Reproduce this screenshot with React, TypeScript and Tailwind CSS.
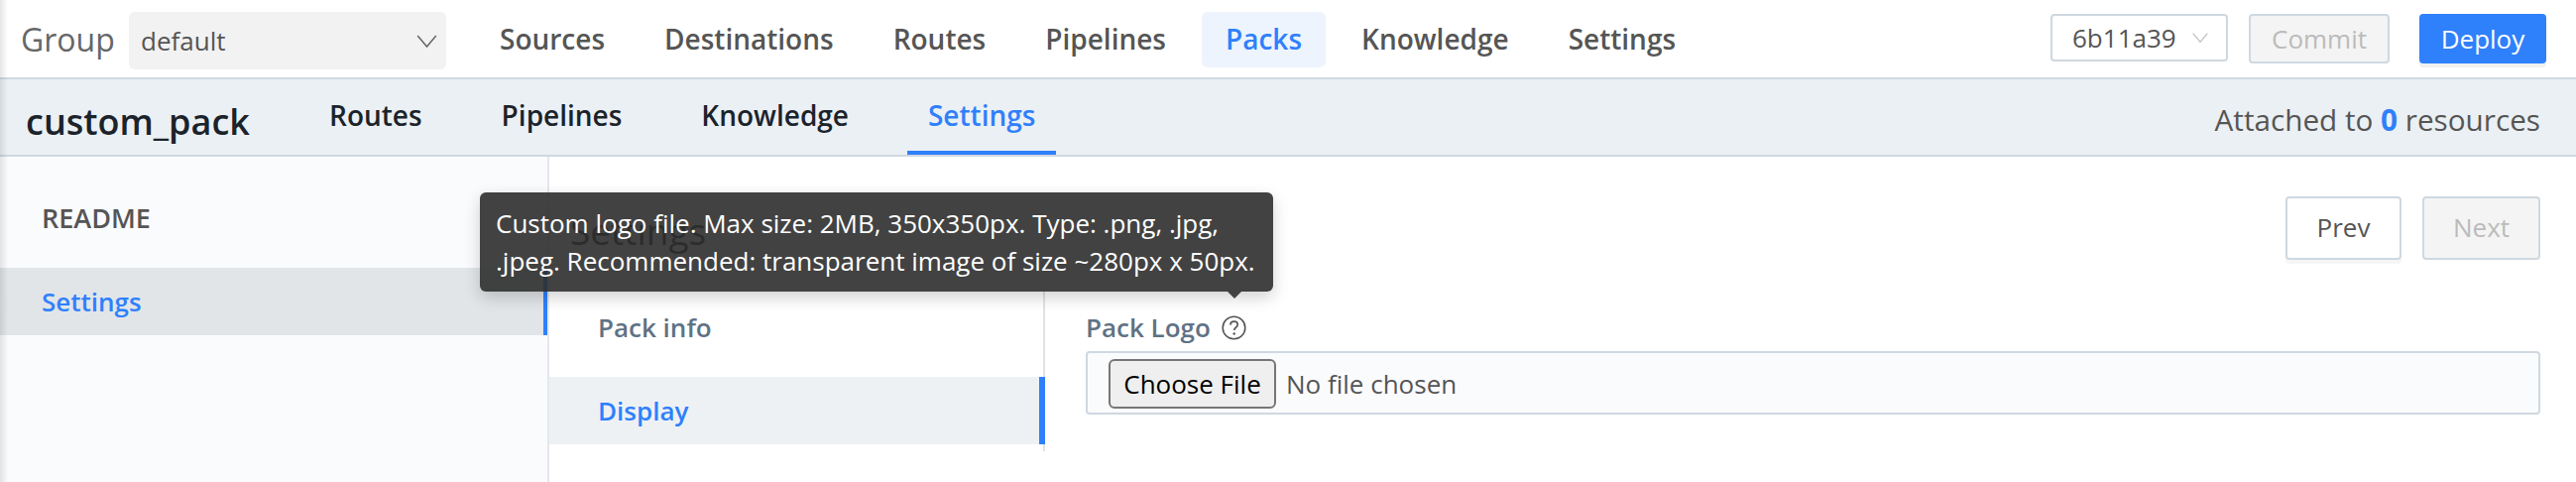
import React from "react";

function Chevron({ className }: { className: string }) {
  return (
    <svg viewBox="0 0 22 14" className={className} fill="none" stroke="currentColor" strokeWidth="1.6">
      <path d="M1 1l10 12L21 1" />
    </svg>
  );
}

const mainNav = [
  { label: "Sources" },
  { label: "Destinations" },
  { label: "Routes" },
  { label: "Pipelines" },
  { label: "Packs", active: true },
  { label: "Knowledge" },
  { label: "Settings" },
];

const subNav = [
  { label: "Routes" },
  { label: "Pipelines" },
  { label: "Knowledge" },
  { label: "Settings", active: true },
];

export default function App() {
  return (
    <div className="relative flex h-[486px] w-[2598px] flex-col overflow-hidden bg-white font-['Open_Sans',sans-serif] text-[#555]">
      <header className="flex h-[80px] shrink-0 items-start border-b-2 border-[#cfd8e0] bg-white">
        <span className="ml-[21px] mt-[19px] w-[93px] shrink-0 text-[32px] leading-[42px] text-[#666]">Group</span>
        <div className="ml-[16px] mt-[12px] flex h-[58px] w-[320px] shrink-0 items-center justify-between rounded-[6px] bg-[#f2f2f2] pl-[12px] pr-[9px] text-[26px] text-[#555]">
          <span>default</span>
          <Chevron className="h-[13px] w-[21px] text-[#666]" />
        </div>
        <nav className="ml-[30px] mt-[12px] flex gap-[12px]">
          {mainNav.map((n) => (
            <div
              key={n.label}
              className={`flex h-[56px] items-center justify-center rounded-[6px] px-[24px] pb-[2px] text-[28px] font-semibold ${
                n.active ? "bg-[#edf4fe] text-[#2f80fb]" : "text-[#555]"
              }`}
            >
              {n.label}
            </div>
          ))}
        </nav>
        <div className="ml-auto mr-[30px] mt-[14px] flex items-start">
          <div className="flex h-[48px] w-[179px] items-center gap-[16px] rounded-[4px] border-2 border-[#cfd8e0] bg-white pl-[20px] text-[26px] text-[#555]">
            <span>6b11a39</span>
            <Chevron className="h-[12px] w-[16px] text-[#bbb]" />
          </div>
          <button className="ml-[21px] h-[50px] w-[142px] rounded-[4px] border-2 border-[#cfd8e0] bg-[#f4f4f4] text-[26px] text-[#bbb]">Commit</button>
          <button className="ml-[30px] h-[50px] w-[128px] rounded-[4px] bg-[#2f80fb] text-[26px] text-white shadow-[0_4px_0_#f1f1f1]">Deploy</button>
        </div>
      </header>

      <div className="flex h-[78px] shrink-0 border-b-2 border-[#cfd8e0] bg-[#ebf0f4]">
        <h1 className="ml-[26px] mt-[19px] w-[225px] shrink-0 text-[36px] font-semibold leading-[48px] text-[#1b232b]">custom_pack</h1>
        <nav className="ml-[60px] flex h-[76px] gap-[38px]">
          {subNav.map((n) => (
            <div
              key={n.label}
              className={`flex h-[76px] items-start justify-center border-b-4 px-[21px] pt-[17px] text-[28px] font-semibold leading-[38px] ${
                n.active ? "border-[#2f80fb] text-[#2f80fb]" : "border-transparent text-[#1b232b]"
              }`}
            >
              {n.label}
            </div>
          ))}
        </nav>
        <div className="ml-auto mr-[36px] mt-[22px] text-[29.7px] leading-[38px] text-[#555]">
          Attached to <span className="font-bold text-[#2f80fb]">0</span> resources
        </div>
      </div>

      <main className="flex min-h-0 flex-1">
        <aside className="w-[554px] shrink-0 border-r-2 border-[#e5e8ea] bg-[#fafbfd]">
          <div className="flex h-[112px] items-center pl-[42px] pt-[12px] text-[27px] font-semibold text-[#555]">README</div>
          <div className="flex h-[68px] items-center border-r-4 border-[#2f80fb] bg-[#e1e5e8] pl-[42px] text-[26px] font-semibold text-[#2f80fb]">Settings</div>
        </aside>

        <section className="flex min-w-0 flex-1 flex-col">
          <div className="flex h-[130px] shrink-0 items-start justify-between pr-[36px]">
            <h2 className="ml-[21px] mt-[50px] text-[37px] leading-[50px] text-[#1b232b]">Settings</h2>
            <div className="mt-[40px] flex gap-[21px]">
              <button className="h-[64px] w-[117px] rounded-[4px] border-2 border-[#cfd8e0] bg-white pb-[2px] text-[26px] text-[#555] shadow-[0_4px_0_#f6f6f6]">Prev</button>
              <button className="h-[64px] w-[119px] rounded-[4px] border-2 border-[#cfd8e0] bg-[#f4f4f4] pb-[2px] text-[26px] text-[#bbb]">Next</button>
            </div>
          </div>

          <div className="flex min-h-0 flex-1 items-start">
            <div className="h-[167px] w-[500px] shrink-0 border-r-2 border-[#e0e3e6]">
              <div className="flex h-[92px] items-center pb-[8px] pl-[49px] text-[26px] font-semibold text-[#5f7285]">Pack info</div>
              <div className="flex h-[68px] w-[500px] items-center border-r-[6px] border-[#2f80fb] bg-[#edf1f4] pl-[49px] text-[26px] font-semibold text-[#2f80fb]">Display</div>
            </div>

            <div className="ml-[41px] mr-[36px] flex min-w-0 flex-1 flex-col pt-[18px]">
              <label className="flex h-[48px] items-center gap-[11px] text-[26px] font-semibold text-[#5f7285]">
                Pack Logo
                <svg viewBox="0 0 25 25" className="h-[25px] w-[25px]" fill="none">
                  <circle cx="12.5" cy="12.5" r="11.3" stroke="#555" strokeWidth="1.6" />
                  <path d="M8.9 9.6c.2-2.2 1.7-3.4 3.7-3.4 2.1 0 3.6 1.3 3.6 3.1 0 1.4-.7 2.1-1.8 2.9-1.1.8-1.6 1.4-1.6 2.8" stroke="#555" strokeWidth="1.7" />
                  <circle cx="12.7" cy="18.5" r="1.2" fill="#555" />
                </svg>
              </label>
              <div className="flex h-[64px] items-center rounded-[4px] border-2 border-[#cfd8e0] bg-[#fafbfd] pl-[21px] pt-[2px]">
                <button className="h-[50px] w-[169px] rounded-[6px] border-2 border-[#767676] bg-[#efefef] text-[26px] text-black">Choose File</button>
                <span className="ml-[10px] text-[26px] text-[#555]">No file chosen</span>
              </div>
            </div>
          </div>
        </section>
      </main>

      <div className="absolute left-0 top-0 h-full w-[8px] bg-gradient-to-r from-black/10 to-transparent" />

      <div className="absolute left-[484px] top-[194px] h-[100px] w-[800px] rounded-[6px] bg-[#2e2e2e]/90 px-[16px] pt-[12px] text-[26px] leading-[38px] text-white shadow-[0_6px_16px_rgba(0,0,0,0.18)]">
        Custom logo file. Max size: 2MB, 350x350px. Type: .png, .jpg,
        <br />
        .jpeg. Recommended: transparent image of size ~280px x 50px.
        <div className="absolute left-[754px] top-[100px] h-0 w-0 border-x-[7px] border-t-[7px] border-x-transparent border-t-[#424242]" />
      </div>
    </div>
  );
}
